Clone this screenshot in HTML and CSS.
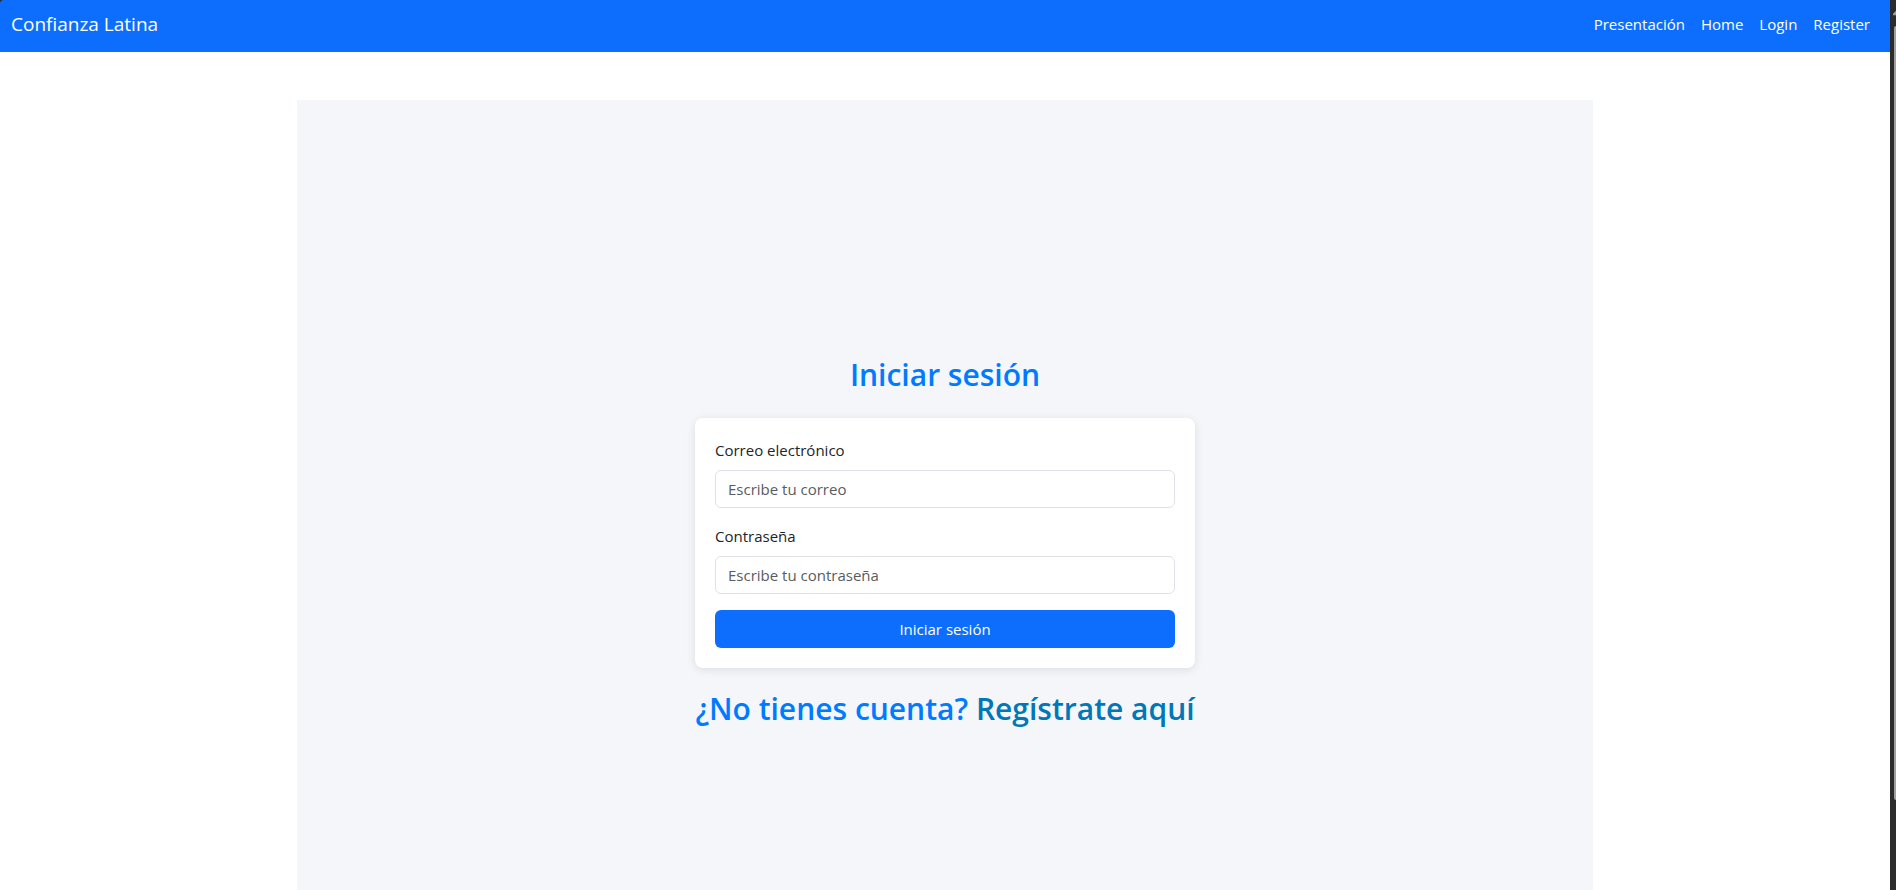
FILE: index.html
```html
<!DOCTYPE html>
<html lang="es">
<head>
  <meta charset="utf-8">
  <meta name="viewport" content="width=device-width, initial-scale=1">
  <title>Confianza Latina</title>
  <link rel="stylesheet" href="styles.css">
</head>
<body>
  <div class="window">
    <div class="page">
      <header class="navbar">
        <a class="brand" href="#">Confianza Latina</a>
        <nav class="nav">
          <a class="nav-link" href="#">Presentación</a>
          <a class="nav-link" href="#">Home</a>
          <a class="nav-link" href="#">Login</a>
          <a class="nav-link" href="#">Register</a>
        </nav>
      </header>
      <main class="login">
        <h2 class="title">Iniciar sesión</h2>
        <form class="card">
          <div class="field">
            <label class="label" for="email">Correo electrónico</label>
            <input class="input" id="email" type="email" placeholder="Escribe tu correo">
          </div>
          <div class="field">
            <label class="label" for="password">Contraseña</label>
            <input class="input" id="password" type="password" placeholder="Escribe tu contraseña">
          </div>
          <button class="button" type="submit">Iniciar sesión</button>
        </form>
        <h2 class="title">¿No tienes cuenta? <a class="register" href="#">Regístrate aquí</a></h2>
      </main>
    </div>
    <div class="scrollbar" aria-hidden="true">
      <svg class="scroll-arrow" viewBox="0 0 4 6"><path d="M4 0L0 4V6H4Z" fill="#9f9f9f"/></svg>
      <div class="scroll-thumb"></div>
    </div>
  </div>
</body>
</html>
```
FILE: styles.css
```css
* {
  box-sizing: border-box;
}

body {
  margin: 0;
  background: #fff;
  color: #212529;
  font-family: "Segoe UI", "Open Sans", "Noto Sans", sans-serif;
  font-size: 15px;
  line-height: 24px;
}

a {
  text-decoration: none;
}

.window {
  display: flex;
  height: 100vh;
  overflow: hidden;
  background: #2c2c2c;
}

.page {
  flex: 1;
  min-width: 0;
  overflow-y: auto;
  scrollbar-width: none;
  background: #fff;
  border-top-left-radius: 4px;
}

.navbar {
  display: flex;
  justify-content: space-between;
  align-items: center;
  padding: 8px 20px 12px 11px;
  background: #0d6efd;
}

.brand {
  color: #fff;
  font-size: 19px;
  line-height: 32px;
}

.nav {
  display: flex;
  gap: 16px;
}

.nav-link {
  color: #fff;
}

.login {
  display: flex;
  flex-direction: column;
  align-items: center;
  justify-content: center;
  max-width: 1296px;
  min-height: 100vh;
  margin: 48px auto 0;
  padding-bottom: 6px;
  background: #f4f6fa;
}

.title {
  margin: 0;
  color: #007bff;
  font-size: 30px;
  font-weight: 600;
  line-height: 38px;
  text-align: center;
}

.register {
  color: #0077b6;
}

.card {
  width: 100%;
  max-width: 500px;
  margin: 24px 0 22px;
  padding: 20px;
  border-radius: 8px;
  background: #fff;
  box-shadow: 0 2px 10px rgba(0, 0, 0, 0.1);
}

.field {
  margin-bottom: 16px;
}

.label {
  display: block;
  margin-bottom: 8px;
}

.input {
  display: block;
  width: 100%;
  height: 38px;
  padding: 6px 12px;
  border: 1px solid #dee2e6;
  border-radius: 6px;
  background: #fff;
  color: #212529;
  font: inherit;
}

.input::placeholder {
  color: #595c5f;
  opacity: 1;
}

.button {
  display: block;
  width: 100%;
  height: 38px;
  border: 0;
  border-radius: 6px;
  background: #0d6efd;
  color: #fff;
  font: inherit;
}

.scrollbar {
  display: flex;
  flex-direction: column;
  align-items: flex-end;
  gap: 10px;
  width: 6px;
  padding: 10px 0 90px;
  background: #2c2c2c;
}

.scroll-arrow {
  width: 3px;
  height: 6px;
}

.scroll-thumb {
  flex: 1;
  width: 2px;
  border-radius: 2px 0 0 2px;
  background: #9f9f9f;
}
```
